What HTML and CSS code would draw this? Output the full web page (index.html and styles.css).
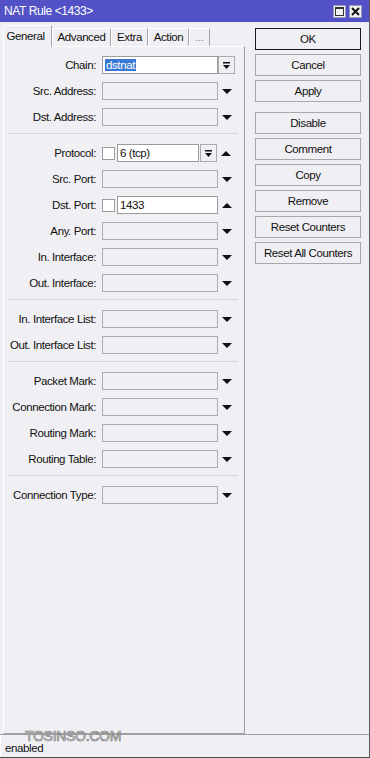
FILE: index.html
```html
<!DOCTYPE html>
<html lang="en">
<head>
    <meta charset="UTF-8">
    <meta name="viewport" content="width=device-width, initial-scale=1.0">
    <title>NAT Rule &lt;1433&gt;</title>
    <link rel="stylesheet" href="styles.css">
</head>
<body>
    <div class="window">
        <div class="titlebar">
            <span class="title">NAT Rule &lt;1433&gt;</span>
            <span class="tbtn">
                <svg width="9" height="9" viewBox="0 0 9 9"><rect x="0.5" y="0.5" width="8" height="8" fill="none" stroke="#333"/><rect x="0.5" y="0.5" width="8" height="1.5" fill="#333"/></svg>
            </span>
            <span class="tbtn">
                <svg width="9" height="9" viewBox="0 0 9 9"><path d="M1 1 L8 8 M8 1 L1 8" stroke="#111" stroke-width="2"/></svg>
            </span>
        </div>

        <div class="main">
            <div class="left">
                <div class="tabs">
                    <div class="tab active">General</div>
                    <div class="tab w-adv">Advanced</div>
                    <div class="tab w-extra">Extra</div>
                    <div class="tab w-action">Action</div>
                    <div class="tab w-more disabled">...</div>
                </div>
                <div class="panel">
                    <div class="group">
                        <div class="row">
                            <label>Chain:</label>
                            <div class="field edit"><span class="sel">dstnat</span></div>
                            <div class="ddbtn">
                                <svg width="9" height="9" viewBox="0 0 9 9"><rect x="1" y="1" width="7" height="1.5" fill="#111"/><polygon points="1,4 8,4 4.5,8" fill="#111"/></svg>
                            </div>
                        </div>
                        <div class="row">
                            <label>Src. Address:</label>
                            <div class="field"></div>
                            <div class="trail down"></div>
                        </div>
                        <div class="row">
                            <label>Dst. Address:</label>
                            <div class="field"></div>
                            <div class="trail down"></div>
                        </div>
                    </div>
                    <div class="sep"></div>
                    <div class="group">
                        <div class="row">
                            <label>Protocol:</label>
                            <div class="check"></div>
                            <div class="field edit short">6 (tcp)</div>
                            <div class="ddbtn small">
                                <svg width="9" height="9" viewBox="0 0 9 9"><rect x="1" y="1" width="7" height="1.5" fill="#111"/><polygon points="1,4 8,4 4.5,8" fill="#111"/></svg>
                            </div>
                            <div class="trail up"></div>
                        </div>
                        <div class="row">
                            <label>Src. Port:</label>
                            <div class="field"></div>
                            <div class="trail down"></div>
                        </div>
                        <div class="row">
                            <label>Dst. Port:</label>
                            <div class="check"></div>
                            <div class="field edit mid">1433</div>
                            <div class="trail up"></div>
                        </div>
                        <div class="row">
                            <label>Any. Port:</label>
                            <div class="field"></div>
                            <div class="trail down"></div>
                        </div>
                        <div class="row">
                            <label>In. Interface:</label>
                            <div class="field"></div>
                            <div class="trail down"></div>
                        </div>
                        <div class="row">
                            <label>Out. Interface:</label>
                            <div class="field"></div>
                            <div class="trail down"></div>
                        </div>
                    </div>
                    <div class="sep"></div>
                    <div class="group">
                        <div class="row">
                            <label>In. Interface List:</label>
                            <div class="field"></div>
                            <div class="trail down"></div>
                        </div>
                        <div class="row">
                            <label>Out. Interface List:</label>
                            <div class="field"></div>
                            <div class="trail down"></div>
                        </div>
                    </div>
                    <div class="sep"></div>
                    <div class="group">
                        <div class="row">
                            <label>Packet Mark:</label>
                            <div class="field"></div>
                            <div class="trail down"></div>
                        </div>
                        <div class="row">
                            <label>Connection Mark:</label>
                            <div class="field"></div>
                            <div class="trail down"></div>
                        </div>
                        <div class="row">
                            <label>Routing Mark:</label>
                            <div class="field"></div>
                            <div class="trail down"></div>
                        </div>
                        <div class="row">
                            <label>Routing Table:</label>
                            <div class="field"></div>
                            <div class="trail down"></div>
                        </div>
                    </div>
                    <div class="sep"></div>
                    <div class="group">
                        <div class="row">
                            <label>Connection Type:</label>
                            <div class="field"></div>
                            <div class="trail down"></div>
                        </div>
                    </div>
                </div>
            </div>

            <div class="actions">
                <button class="btn default">OK</button>
                <button class="btn">Cancel</button>
                <button class="btn">Apply</button>
                <button class="btn spaced">Disable</button>
                <button class="btn">Comment</button>
                <button class="btn">Copy</button>
                <button class="btn">Remove</button>
                <button class="btn">Reset Counters</button>
                <button class="btn">Reset All Counters</button>
            </div>
        </div>

        <div class="status">
            <div class="status-cell">enabled</div>
        </div>
        <div class="watermark">TOSINSO.COM</div>
    </div>
</body>
</html>
```

FILE: styles.css
```css
body {
    margin: 0;
    padding: 0;
    font-family: "Liberation Sans", Arial, sans-serif;
    font-size: 11.5px;
    letter-spacing: -0.4px;
    color: #111;
    background-color: #f0eff3;
}
.window {
    position: relative;
    width: 370px;
    height: 758px;
    box-sizing: border-box;
    background-color: #f0eff3;
    border-right: 1px solid #5a5a5a;
    border-bottom: 1px solid #4a4a4a;
    overflow: hidden;
}
.titlebar {
    display: flex;
    align-items: center;
    height: 22px;
    padding: 0 7px 0 4px;
    background-color: #5252c6;
    color: white;
    border-bottom: 1px solid #e8e8f4;
}
.title {
    flex: 1;
    font-size: 12px;
}
.tbtn {
    display: flex;
    align-items: center;
    justify-content: center;
    width: 13px;
    height: 13px;
    margin-left: 3px;
    background-color: #f2f2f2;
    border: 1px solid #9a9ac0;
    box-sizing: border-box;
}
.main {
    display: flex;
    height: 711px;
}
.left {
    width: 245px;
    padding: 2px 0 0 3px;
    box-sizing: border-box;
    display: flex;
    flex-direction: column;
}
.tabs {
    display: flex;
    align-items: flex-end;
    height: 21px;
}
.tab {
    height: 18px;
    box-sizing: border-box;
    line-height: 17px;
    text-align: center;
    border-top: 1px solid #ffffff;
    border-left: 1px solid #ffffff;
    border-right: 1px solid #a6a6a6;
}
.tab.active {
    width: 49px;
    height: 22px;
    line-height: 20px;
    margin-bottom: -1px;
    padding-right: 4px;
    background-color: #f0eff3;
    position: relative;
    z-index: 1;
}
.w-adv { width: 59px; }
.w-extra { width: 37px; }
.w-action { width: 41px; }
.w-more { width: 21px; }
.tab.disabled {
    color: #8a8a8a;
}
.panel {
    flex: 1;
    padding: 9px 0 0 0;
    border-top: 1px solid #ffffff;
    border-left: 1px solid #ffffff;
    border-right: 1px solid #a0a0a0;
    border-bottom: 1px solid #a0a0a0;
}
.row {
    display: flex;
    align-items: center;
    height: 18px;
    margin-bottom: 8px;
}
.group .row:last-child {
    margin-bottom: 0;
}
.row label {
    width: 92px;
    margin-right: 6px;
    text-align: right;
    white-space: nowrap;
}
.field {
    width: 116px;
    height: 18px;
    box-sizing: border-box;
    border: 1px solid #ababab;
    background-color: #f0eff3;
    padding-left: 2px;
    line-height: 16px;
    white-space: nowrap;
}
.field.edit {
    background-color: #ffffff;
    border-color: #9c9c9c;
}
.field.short {
    width: 82px;
}
.field.mid {
    width: 101px;
}
.sel {
    background-color: #3778d4;
    color: white;
    padding: 0 1px;
}
.check {
    width: 13px;
    height: 13px;
    box-sizing: border-box;
    border: 1px solid #9c9c9c;
    background-color: #ffffff;
    margin-right: 2px;
}
.ddbtn {
    display: flex;
    align-items: center;
    justify-content: center;
    width: 17px;
    height: 18px;
    box-sizing: border-box;
    border: 1px solid #ababab;
    background-color: #f0eff3;
}
.ddbtn.small {
    margin-left: 1px;
}
.trail {
    width: 18px;
    height: 18px;
    display: flex;
    align-items: center;
    justify-content: center;
}
.trail.down::after {
    content: "";
    border-left: 5px solid transparent;
    border-right: 5px solid transparent;
    border-top: 5px solid #111;
}
.trail.up::after {
    content: "";
    border-left: 5px solid transparent;
    border-right: 5px solid transparent;
    border-bottom: 5px solid #111;
}
.sep {
    margin: 7px 6px 10px 4px;
    border-top: 1px solid #d6d6d8;
}
.actions {
    display: flex;
    flex-direction: column;
    gap: 4px;
    padding: 5px 0 0 10px;
}
.btn {
    width: 106px;
    height: 22px;
    font-family: inherit;
    font-size: 11.5px;
    letter-spacing: -0.4px;
    color: #111;
    background-color: #f0eff3;
    border: 1px solid #a8a8a8;
    padding: 0;
}
.btn.default {
    border-color: #1a1a1a;
}
.btn.spaced {
    margin-top: 6px;
}
.status {
    height: 23px;
    border-top: 1px solid #a0a0a0;
    display: flex;
}
.status-cell {
    padding: 7px 0 0 4px;
    border-left: 1px solid #ffffff;
    width: 40px;
}
.watermark {
    position: absolute;
    left: 25px;
    top: 728px;
    font-size: 14px;
    letter-spacing: -0.3px;
    color: #f6f6f6;
    -webkit-text-stroke: 0.7px #777;
}
```
